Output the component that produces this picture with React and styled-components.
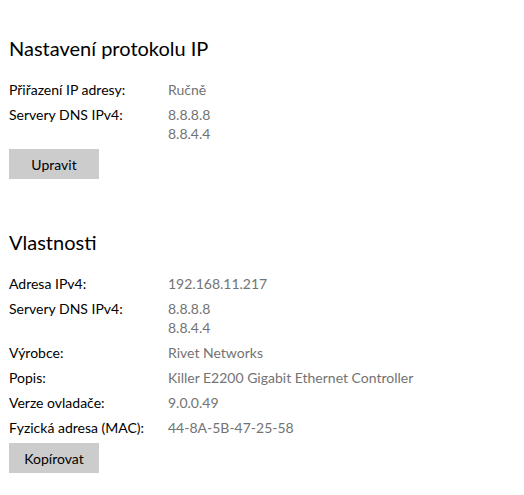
import React from "react";
import styled, { createGlobalStyle } from "styled-components";

const GlobalStyle = createGlobalStyle`
  html, body {
    margin: 0;
    padding: 0;
    background: #ffffff;
  }
  body {
    font-family: Lato, "Noto Sans", sans-serif;
    color: #000000;
    -webkit-font-smoothing: antialiased;
  }
`;

const Page = styled.div`
  display: flex;
  flex-direction: column;
  align-items: flex-start;
  padding: 34px 0 20px 9px;
`;

const Section = styled.section`
  display: flex;
  flex-direction: column;
  align-items: flex-start;
  margin-top: ${(p) => (p.$first ? "0" : "49px")};
`;

const Heading = styled.h2`
  margin: 0 0 18px 0;
  font-size: 20px;
  line-height: 28px;
  font-weight: 400;
  color: #000000;
`;

const InfoGrid = styled.dl`
  margin: 0;
  display: grid;
  grid-template-columns: 159px auto;
  row-gap: 6px;
`;

const Label = styled.dt`
  margin: 0;
  font-size: 14px;
  line-height: 19px;
  color: #000000;
`;

const Value = styled.dd`
  margin: 0;
  font-size: 14px;
  line-height: 19px;
  color: #737373;
  display: flex;
  flex-direction: column;
`;

const Button = styled.button`
  margin-top: 6px;
  width: 90px;
  height: 30px;
  border: none;
  background: #cccccc;
  color: #000000;
  font-family: inherit;
  font-size: 14px;
  padding: 0;
  cursor: pointer;
`;

const ipSettings = [
  { label: "Přiřazení IP adresy:", values: ["Ručně"] },
  { label: "Servery DNS IPv4:", values: ["8.8.8.8", "8.8.4.4"] },
];

const properties = [
  { label: "Adresa IPv4:", values: ["192.168.11.217"] },
  { label: "Servery DNS IPv4:", values: ["8.8.8.8", "8.8.4.4"] },
  { label: "Výrobce:", values: ["Rivet Networks"] },
  { label: "Popis:", values: ["Killer E2200 Gigabit Ethernet Controller"] },
  { label: "Verze ovladače:", values: ["9.0.0.49"] },
  { label: "Fyzická adresa (MAC):", values: ["44-8A-5B-47-25-58"] },
];

function Info({ rows }) {
  return (
    <InfoGrid>
      {rows.map((r) => (
        <React.Fragment key={r.label + r.values[0]}>
          <Label>{r.label}</Label>
          <Value>
            {r.values.map((v) => (
              <span key={v}>{v}</span>
            ))}
          </Value>
        </React.Fragment>
      ))}
    </InfoGrid>
  );
}

export default function App() {
  return (
    <>
      <GlobalStyle />
      <Page>
        <Section $first>
          <Heading>Nastavení protokolu IP</Heading>
          <Info rows={ipSettings} />
          <Button>Upravit</Button>
        </Section>
        <Section>
          <Heading>Vlastnosti</Heading>
          <Info rows={properties} />
          <Button>Kopírovat</Button>
        </Section>
      </Page>
    </>
  );
}
